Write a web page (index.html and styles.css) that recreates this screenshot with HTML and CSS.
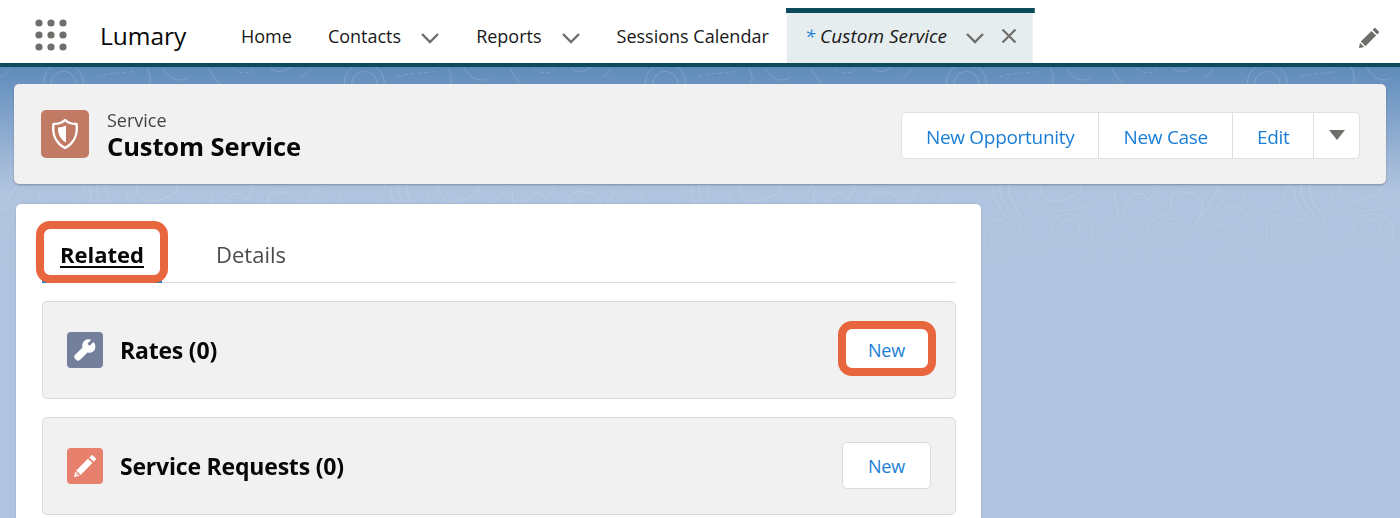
FILE: index.html
```html
<!DOCTYPE html>
<html lang="en">
<head>
<meta charset="utf-8">
<title>Custom Service</title>
<link rel="stylesheet" href="styles.css">
</head>
<body>
<header class="nav">
  <svg class="launcher" width="34" height="34" viewBox="0 0 34 34"><g fill="#706e6b"><circle cx="5" cy="5" r="3.6"/><circle cx="17" cy="5" r="3.6"/><circle cx="29" cy="5" r="3.6"/><circle cx="5" cy="17" r="3.6"/><circle cx="17" cy="17" r="3.6"/><circle cx="29" cy="17" r="3.6"/><circle cx="5" cy="29" r="3.6"/><circle cx="17" cy="29" r="3.6"/><circle cx="29" cy="29" r="3.6"/></g></svg>
  <span class="app-name">Lumary</span>
  <nav class="nav-items">
    <a class="nav-item">Home</a>
    <a class="nav-item">Contacts<svg class="chev" width="20" height="12" viewBox="0 0 20 12"><path d="M2 2l8 8 8-8" fill="none" stroke="#706e6b" stroke-width="2.4"/></svg></a>
    <a class="nav-item">Reports<svg class="chev" width="20" height="12" viewBox="0 0 20 12"><path d="M2 2l8 8 8-8" fill="none" stroke="#706e6b" stroke-width="2.4"/></svg></a>
    <a class="nav-item">Sessions Calendar</a>
  </nav>
  <div class="active-tab">
    <span class="tab-label"><span class="star">*</span> Custom Service</span>
    <svg class="tab-chev" width="20" height="12" viewBox="0 0 20 12"><path d="M2 2l8 8 8-8" fill="none" stroke="#706e6b" stroke-width="2.4"/></svg>
    <svg class="tab-x" width="16" height="16" viewBox="0 0 16 16"><path d="M1.500 1.500l13 13M14.500 1.500l-13 13" fill="none" stroke="#706e6b" stroke-width="2.200"/></svg>
  </div>
  <svg class="pencil" width="21" height="21" viewBox="0 0 21 21"><path fill="#706e6b" d="M15.200 1.200a1 1 0 0 1 1.400 0l3.200 3.200a1 1 0 0 1 0 1.400l-1.600 1.600-4.600-4.600zM12.500 3.900l4.600 4.600L6.400 19.200l-4.600-4.600zM1 15.800l4.200 4.200-4.600 1a.4.4 0 0 1-.5-.5z"/></svg>
</header>
<main class="page">
  <svg class="topo" width="1400" height="215" aria-hidden="true">
    <defs>
      <linearGradient id="fade" x1="0" y1="0" x2="0" y2="1">
        <stop offset="0" stop-color="#fff"/>
        <stop offset=".62" stop-color="#fff"/>
        <stop offset=".95" stop-color="#000"/>
      </linearGradient>
      <mask id="fademask"><rect width="1400" height="215" fill="url(#fade)"/></mask>
      <g id="tile" transform="translate(0 113) scale(.3333)">
        <ellipse cx="55" cy="180" rx="42" ry="62"/>
        <ellipse cx="55" cy="182" rx="24" ry="36"/>
        <ellipse cx="55" cy="183" rx="12" ry="18"/>
        <path d="M40 20c-12 50 55 90 72 150s58 55 82 30 20-60 24-70"/>
        <path d="M62 15c-14 45 45 85 62 140s40 55 52 45"/>
        <path d="M88 15c-12 40 32 70 46 125"/>
        <path d="M178 18c10 40 30 52 60 44s72-22 62-42"/>
        <path d="M150 30c0 35 12 72 40 70s130-10 178-50 32-40 32-40" stroke-dasharray="12 8"/>
        <path d="M238 108c20-8 70-8 86 10s14 62 4 70-60 12-88 0-24-68-2-80z"/>
        <path d="M248 126c14-8 42-8 50 6s-14 42-26 42-38-36-24-48z"/>
        <path d="M374 240c0-30 30-60 56-60s24 50 6 62-62 14-62-2z"/>
        <path d="M310 260c30-60 60-90 60-110s40-20 44-50-24-40-4-70"/>
        <path d="M430 92c10-30 30-52 50-52s20 25 30 15 10-30 20-40"/>
        <path d="M430 92c5 30 50 60 65 120s10 40 10 50"/>
        <path d="M518 150c0-20 40-40 70-32s20 34-4 50-66 4-66-18z"/>
        <path d="M536 146c4-14 28-22 50-16 24 8-8 40-30 38-14 0-24-12-20-22z"/>
        <path d="M500 150c0-30 40-40 60-50s10-30 15-50 50-20 80 0 0 80-20 100-50 50-90 52-45-22-45-52z"/>
        <path d="M490 122c30-10 50-30 60-60" stroke-dasharray="12 8"/>
        <path d="M680 176c0-36 46-96 80-96s58 46 68 80 50 90 80 96"/>
        <path d="M706 132c30 8 54 30 90 34 36 6 30 50-10 30s-110-30-80-64z"/>
        <path d="M640 130c30-10 60-90 80-110"/>
        <path d="M690 90c30-20 60-40 70-70" stroke-dasharray="12 8"/>
        <path d="M790 40c0 40 40 60 80 50s46-50 56-80" stroke-dasharray="12 8"/>
        <path d="M860 240c0-60-8-136 24-134s24 70 16 130"/>
        <path d="M874 240c0-50-4-104 10-102s10 40 8 100"/>
        <path d="M540 260c20-30 90-40 115 10"/>
        <path d="M565 270c10-20 60-24 75 5"/>
        <path d="M690 260c-4-40 100-60 115 15"/>
        <path d="M716 265c0-30 50-40 60 5"/>
        <path d="M836 265c5-30 40-30 50 0"/>
      </g>
      <g id="strip" transform="translate(-77 -7) scale(.3333)">
        <circle cx="190" cy="70" r="60"/>
        <circle cx="190" cy="72" r="38"/>
        <path d="M0 50c10 0 20-15 30-25"/>
        <path d="M290 50c30-10 60-10 110-15" stroke-dasharray="12 8"/>
        <path d="M440 20c14 30 14 50 0 70"/>
        <path d="M490 22c10 30 50 50 74 30"/>
        <path d="M625 22c10 20 30 50 45 60"/>
        <path d="M700 25c20 20 60 15 60 0" stroke-dasharray="12 8"/>
        <path d="M810 25c15 15 50 10 60-5"/>
      </g>
    </defs>
    <g class="topo-lines" mask="url(#fademask)">
      <use href="#tile" x="-224"/><use href="#tile" x="77"/><use href="#tile" x="378"/><use href="#tile" x="679"/><use href="#tile" x="980"/><use href="#tile" x="1281"/>
      <use href="#strip" x="77"/><use href="#strip" x="378"/><use href="#strip" x="679"/><use href="#strip" x="980"/><use href="#strip" x="1281"/>
    </g>
  </svg>
  <section class="record-head">
    <div class="record-id">
      <span class="record-icon">
        <svg width="28" height="32" viewBox="0 0 28 32"><path d="M14 2C16.500 4.500 20 6 25.500 6 27 16 23 25 14 30 5 25 1 16 2.500 6 8 6 11.500 4.500 14 2z" fill="none" stroke="#fff" stroke-width="2.400" stroke-linejoin="round"/><path d="M15 7.500v17C10 22 6.500 16 7 9.500c3 0 6-.8 8-2z" fill="#fff"/></svg>
      </span>
      <div class="record-text">
        <div class="record-type">Service</div>
        <h1 class="record-title">Custom Service</h1>
      </div>
    </div>
    <div class="btn-group">
      <a class="group-btn">New Opportunity</a>
      <a class="group-btn group-wide">New Case</a>
      <a class="group-btn">Edit</a>
      <a class="group-btn group-more"><svg width="16" height="10" viewBox="0 0 16 10"><path d="M0 0h16L8 10z" fill="#706e6b"/></svg></a>
    </div>
  </section>
  <section class="main-card">
    <div class="tabs">
      <a class="tab tab-on marked">Related</a>
      <a class="tab">Details</a>
    </div>
    <article class="related">
      <div class="related-title">
        <span class="mini-icon mini-rates"><svg width="24" height="24" viewBox="0 0 24 24"><path fill="#fff" d="M20.400 3.900l-3.500 3.500a.6.6 0 0 1-.8 0l-1.300-1.300a.6.6 0 0 1 0-.8L18.300 1.800C15.800.8 12.800 1.300 11 3.200c-1.700 1.700-2.200 4.100-1.500 6.300L2.200 16.800a2.900 2.900 0 0 0 0 4.100l.9.900a2.900 2.900 0 0 0 4.100 0l7.300-7.300c2.200.7 4.600.2 6.300-1.500 1.900-1.900 2.400-6.600-.4-9.100z"/></svg></span>
        <h2 class="related-name">Rates (0)</h2>
      </div>
      <button class="new-btn marked-btn">New</button>
    </article>
    <article class="related">
      <div class="related-title">
        <span class="mini-icon mini-requests"><svg width="24" height="24" viewBox="0 0 24 24"><path fill="#fff" fill-rule="evenodd" d="M18.300 1.400a1.200 1.200 0 0 1 1.600 0l2.800 2.800a1.200 1.200 0 0 1 0 1.600l-2 2-4.400-4.400zM15 4.700l4.400 4.400-11.800 11.800-4.400-4.400zM2.400 17.600l4.200 4.200-5 1.200a.5.500 0 0 1-.5-.5zM3.600 19.600l-.8 2 2-.7z"/></svg></span>
        <h2 class="related-name">Service Requests (0)</h2>
      </div>
      <button class="new-btn">New</button>
    </article>
  </section>
</main>
</body>
</html>
```
FILE: styles.css
```css
* { box-sizing: border-box; }
html, body { margin: 0; height: 100%; overflow: hidden; }
body { font-family: "Open Sans", "Noto Sans", "Liberation Sans", sans-serif; color: #080707; background: #b0c4df; }

.nav { height: 67px; background: #fff; border-bottom: 4px solid #0c4a5c; display: flex; align-items: flex-start; position: relative; z-index: 2; }
.launcher { margin: 18px 0 0 34px; flex: none; }
.app-name { margin: 17px 0 0 32px; width: 141px; font-size: 24.500px; line-height: 38px; }
.nav-items { display: flex; margin-top: 21px; }
.nav-item { font-size: 18px; line-height: 30px; display: flex; align-items: center; margin-right: 36px; color: #181818; white-space: nowrap; }
.chev { margin-left: 19px; margin-top: 4px; }
.active-tab { margin: 8px 0 0 -19px; width: 249px; height: 55px; display: flex; align-items: center; padding: 1px 16px 0 19px; background: linear-gradient(#0c4a5c 5px, #e6edef 5px) no-repeat; clip-path: polygon(0 0, 100% 0, 100% 5px, 99.2% 5px, 99.2% 100%, .4% 100%, .4% 5px, 0 5px); }
.tab-label { font-style: italic; font-size: 19px; white-space: nowrap; color: #181818; }
.star { color: #1b7ed6; }
.tab-chev { margin-left: 18px; margin-top: 3px; flex: none; }
.tab-x { margin-left: 16px; flex: none; }
.pencil { position: absolute; right: 20px; top: 27px; }

.page { position: relative; height: 451px; padding: 17px 14px 0; background: linear-gradient(#5f8bbc 0, #6f97c3 24px, #a3bad9 100px, #b0c4df 125px); }
.topo { position: absolute; left: 0; top: 0; pointer-events: none; }
.topo-lines { fill: none; stroke: #fff; stroke-opacity: .17; stroke-width: 3; }

.record-head { position: relative; height: 100px; background: #f1f1f1; border-radius: 5px; box-shadow: 0 1px 2px rgba(70,80,90,.45); display: flex; align-items: center; justify-content: space-between; padding: 3px 26px 0 27px; }
.record-id { display: flex; align-items: center; gap: 18px; margin-top: -1px; }
.record-icon { width: 48px; height: 48px; margin-bottom: 3px; background: #c17a63; border-radius: 5px; display: flex; align-items: center; justify-content: center; }
.record-text { display: flex; flex-direction: column; }
.record-type { font-size: 18px; line-height: 22px; color: #444; }
.record-title { margin: 0; font-size: 25.500px; line-height: 30px; font-weight: 700; letter-spacing: -.1px; }

.btn-group { display: flex; height: 47px; background: #fff; border: 1px solid #e0e0e0; border-radius: 5px; }
.group-btn { display: flex; align-items: center; justify-content: center; font-size: 19px; color: #1b7ed6; letter-spacing: -.3px; padding: 3px 23.500px 0; border-left: 1px solid #dedede; white-space: nowrap; }
.group-btn:first-child { border-left: 0; }
.group-wide { padding: 3px 24.500px 0; }
.group-more { width: 46px; padding: 0 0 2px; }

.main-card { position: relative; margin: 20px 0 0 2px; width: 965px; height: 330px; background: #fff; border-radius: 5px 5px 0 0; padding: 0 25px 0 26px; box-shadow: 0 0 2px rgba(90,100,120,.3); }
.tabs { height: 79px; border-bottom: 1px solid #dcdcdc; display: flex; align-items: flex-end; }
.tab { position: relative; font-size: 22px; line-height: 30px; height: 43px; color: #4a4a4a; margin-left: 72px; }
.tab-on { margin-left: 18px; font-weight: 700; color: #080707; text-decoration: underline; text-underline-offset: 3px; }
.tab-on::before { content: ""; position: absolute; left: -18px; right: -18px; bottom: -1px; height: 3px; background: #1b7ed6; }
.marked::after { content: ""; position: absolute; left: -24px; right: -24px; top: -18px; bottom: -1px; border: 8px solid #e8663d; border-radius: 14px; }

.related { height: 98px; margin-top: 18px; background: #f1f1f1; border: 1px solid #dddbda; border-radius: 5px; display: flex; justify-content: space-between; align-items: center; padding: 0 24px; }
.related-title { display: flex; align-items: center; gap: 17px; }
.mini-icon { width: 36px; height: 36px; border-radius: 4px; display: flex; align-items: center; justify-content: center; }
.mini-rates { background: #747f9b; }
.mini-requests { background: #e8806e; }
.related-name { margin: 0; font-size: 23px; font-weight: 700; letter-spacing: -.2px; }
.new-btn { position: relative; width: 89px; height: 47px; background: #fff; border: 1px solid #dddbda; border-radius: 5px; font: inherit; font-size: 18px; color: #1b7ed6; letter-spacing: -.2px; padding: 1px 0 0; margin-bottom: 2px; }
.marked-btn::after { content: ""; position: absolute; left: -5px; right: -6px; top: -6px; bottom: -4px; border: 8px solid #e8663d; border-radius: 14px; }
```
